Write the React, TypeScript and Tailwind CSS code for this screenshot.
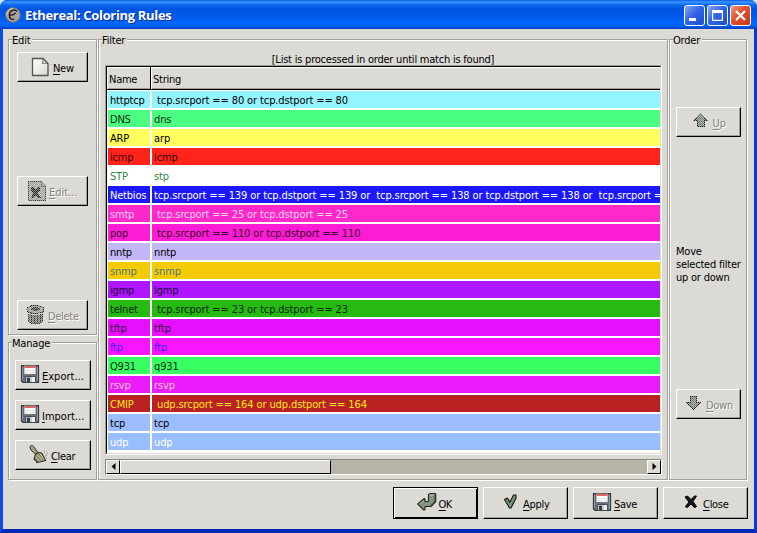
import type { ReactNode } from 'react';

type Rule = { name: string; filter: string; row: string };

const rules: Rule[] = [
  { name: 'httptcp', filter: ' tcp.srcport == 80 or tcp.dstport == 80', row: 'bg-[#94f4ff] text-black' },
  { name: 'DNS', filter: 'dns', row: 'bg-[#4bff81] text-[#102a18]' },
  { name: 'ARP', filter: 'arp', row: 'bg-[#fffe5e] text-black' },
  { name: 'icmp', filter: 'icmp', row: 'bg-[#ff241b] text-[#3a0808]' },
  { name: 'STP', filter: 'stp', row: 'bg-white text-[#2c8a3c]' },
  {
    name: 'Netbios',
    filter:
      'tcp.srcport == 139 or tcp.dstport == 139 or  tcp.srcport == 138 or tcp.dstport == 138 or  tcp.srcport ==',
    row: 'bg-[#1c18fc] text-white',
  },
  { name: 'smtp', filter: ' tcp.srcport == 25 or tcp.dstport == 25', row: 'bg-[#ff28c8] text-[#ffd0f0]' },
  { name: 'pop', filter: ' tcp.srcport == 110 or tcp.dstport == 110', row: 'bg-[#ff1cd4] text-[#350a2c]' },
  { name: 'nntp', filter: 'nntp', row: 'bg-[#c2b6f6] text-black' },
  { name: 'snmp', filter: 'snmp', row: 'bg-[#f5cb08] text-[#4f7a7c]' },
  { name: 'igmp', filter: 'igmp', row: 'bg-[#b016ff] text-[#1c0430]' },
  { name: 'telnet', filter: ' tcp.srcport == 23 or tcp.dstport == 23', row: 'bg-[#27ba12] text-[#062604]' },
  { name: 'tftp', filter: 'tftp', row: 'bg-[#e610ff] text-[#3a0640]' },
  { name: 'ftp', filter: 'ftp', row: 'bg-[#f716ff] text-[#4a20ff]' },
  { name: 'Q931', filter: 'q931', row: 'bg-[#38ff62] text-[#062a10]' },
  { name: 'rsvp', filter: 'rsvp', row: 'bg-[#ea1cff] text-[#ffc8b8]' },
  { name: 'CMIP', filter: ' udp.srcport == 164 or udp.dstport == 164', row: 'bg-[#b82222] text-[#ffe818]' },
  { name: 'tcp', filter: 'tcp', row: 'bg-[#9cbeff] text-black' },
  { name: 'udp', filter: 'udp', row: 'bg-[#98beff] text-white' },
];

function Group({ title, className, children }: { title: string; className: string; children: ReactNode }) {
  return (
    <section
      className={`relative flex flex-col border border-[#a19f97] shadow-[1px_1px_0_#fff,inset_1px_1px_0_#fff] ${className}`}
    >
      <span className="absolute -top-[6px] left-[3px] bg-[#dbdad5] pr-[2px] leading-[14px] tracking-[-0.2px]">{title}</span>
      {children}
    </section>
  );
}

type ButtonProps = {
  icon: ReactNode;
  label: string;
  size: string;
  labelWidth: string;
  disabled?: boolean;
  primary?: boolean;
};

function Button({ icon, label, size, labelWidth, disabled, primary }: ButtonProps) {
  const edge = primary
    ? 'border border-black shadow-[inset_1px_1px_0_#fff,inset_-1px_-1px_0_#000]'
    : 'border border-t-white border-l-white border-r-black border-b-black shadow-[inset_-1px_-1px_0_#a19f97]';
  return (
    <button
      type="button"
      disabled={disabled}
      className={`flex shrink-0 items-center justify-center gap-[2px] ${edge} ${size} ${
        disabled ? 'text-[#85837c] [text-shadow:1px_1px_0_#fff]' : 'text-black'
      }`}
    >
      {icon}
      <span className={`pt-[3px] text-left leading-[14px] whitespace-nowrap ${labelWidth}`}>
        <span className="underline decoration-1 underline-offset-2">{label[0]}</span>
        {label.slice(1)}
      </span>
    </button>
  );
}

function Stipple({ id }: { id: string }) {
  return (
    <pattern id={id} width="2" height="2" patternUnits="userSpaceOnUse">
      <rect width="1" height="1" fill="#dbdad5" fillOpacity=".6" />
      <rect x="1" y="1" width="1" height="1" fill="#dbdad5" fillOpacity=".6" />
    </pattern>
  );
}

const NewIcon = () => (
  <svg width="20" height="20" viewBox="0 0 20 20">
    <defs>
      <linearGradient id="paper" x1="0" y1="0" x2="1" y2="1">
        <stop offset="0" stopColor="#fff" />
        <stop offset="1" stopColor="#d8d8d2" />
      </linearGradient>
    </defs>
    <path d="M1.500 1.500h10.500l5 5v12H1.500z" fill="url(#paper)" stroke="#55554f" strokeWidth="1.300" strokeLinejoin="round" />
    <path d="M11.500 1.500c1 2 .5 3.500-.2 5 2-.6 3.500-.4 5.700.3z" fill="#eeeeea" stroke="#55554f" strokeWidth=".9" />
  </svg>
);

const EditIcon = () => (
  <svg width="20" height="20" viewBox="0 0 20 20" shapeRendering="crispEdges">
    <defs><Stipple id="edit-dots" /></defs>
    <path d="M1.500.5h13l4 4v15h-17z" fill="#a4a4a0" stroke="#444" />
    <path d="M4 6h3l2 3 2-3h2v3l-2 3 3 5h-3l-2-3-2 3H4l2-5-2-3z" fill="#222" />
    <path d="M14 1v4h4" fill="none" stroke="#555" />
    <rect x="1" width="18" height="20" fill="url(#edit-dots)" />
  </svg>
);

const TrashIcon = () => (
  <svg width="20" height="20" viewBox="0 0 20 20" shapeRendering="crispEdges">
    <defs><Stipple id="trash-dots" /></defs>
    <path d="M2 5l1 12q6.500 4 13 0l1-12z" fill="#777772" stroke="#333" />
    <path d="M5 8v9M8 9v9M11 9v9M14 8v9" stroke="#222" />
    <ellipse cx="9.500" cy="4.500" rx="8.500" ry="4" fill="#a0a09a" stroke="#222" />
    <ellipse cx="9.500" cy="4" rx="4.500" ry="1.700" fill="#333" />
    <path d="M2 8q7 3 15 0" fill="none" stroke="#ccc" />
    <rect width="20" height="20" fill="url(#trash-dots)" />
  </svg>
);

const DiskIcon = () => (
  <svg width="20" height="20" viewBox="0 0 20 20" className="-mt-[2px]">
    <path d="M1.500 1.500h17v17H3l-1.500-1.500z" fill="#67727d" stroke="#30373e" strokeWidth="1.200" />
    <path d="M2.500 3v13M17.500 3v14" stroke="#8d9cab" />
    <path d="M4 1.500h12v9H4z" fill="#fbfbfa" stroke="#4a4a4a" strokeWidth=".6" />
    <path d="M4.300 2h11.400v2H4.300z" fill="#dc6a64" />
    <path d="M5 6.500h10M5 8.500h10" stroke="#dcdcdc" strokeWidth=".8" />
    <path d="M5.500 12.500h10v6h-10z" fill="#c6cacd" stroke="#333a40" strokeWidth=".8" />
    <path d="M7 13.700h3v4.300H7z" fill="#343c44" />
    <path d="M12 13h3v5h-3z" fill="#eceeef" />
  </svg>
);

const BroomIcon = () => (
  <svg width="20" height="20" viewBox="0 0 20 20" className="-mt-[2px]">
    <path d="M1 3.500C1 1.500 3 .8 4.500 2.400l5 7-1.800 1.700L2 6z" fill="#a9a58e" stroke="#2f2e25" />
    <path d="M6.500 10.500q3-3.500 6.500-1l3.500 7q-3 1-8.500 2-.5-1.500-3-3.500z" fill="#8c8c6c" stroke="#2f2e25" strokeWidth="1.100" />
    <path d="M8 10.500l5.500 6M11 9.500l4 6M6.500 12.500l4.500 5" stroke="#d1cfaa" />
    <path d="M15 9h1M17 11h1M17 14h1M16 12h1M15 7h1M18 9h1" stroke="#858578" />
  </svg>
);

const UpIcon = () => (
  <svg width="20" height="20" viewBox="0 0 20 20" className="-mt-[5px]" shapeRendering="crispEdges">
    <defs><Stipple id="up-dots" /></defs>
    <path d="M9.500 3.500l6.500 7h-3v6H6v-6H3z" fill="#748274" stroke="#222" />
    <rect width="20" height="20" fill="url(#up-dots)" />
  </svg>
);

const DownIcon = () => (
  <svg width="20" height="20" viewBox="0 0 20 20" className="-mt-[2px]" shapeRendering="crispEdges">
    <defs><Stipple id="down-dots" /></defs>
    <path d="M6.500 3.500h6v6h4l-7 7-7-7h4z" fill="#748274" stroke="#222" />
    <rect width="20" height="20" fill="url(#down-dots)" />
  </svg>
);

const OkIcon = () => (
  <svg width="20" height="20" viewBox="0 0 20 20" className="-mt-[2px]">
    <path
      d="M11.500 2.500l2-1h4.500l.7.700v7.300l-4.700 5H8v3.200l-1.200.3-6-6 6.500-5.500.7.500v2.500h3l.5-1z"
      fill="#82937f" stroke="#20251f" strokeWidth="1.100" strokeLinejoin="round"
    />
    <path d="M12.500 3.200h4.500M7 8.500l-4.500 3.700" fill="none" stroke="#b3c0ae" />
    <path d="M17.500 3v6l-4 4.500" fill="none" stroke="#566552" />
  </svg>
);

const ApplyIcon = () => (
  <svg width="20" height="20" viewBox="0 0 20 20" className="-mt-[2px]">
    <path
      d="M3.500 7.500l3-1.500 2.300 4.300 3.700-7.300h2.500v3.200L10 16H8.500z"
      fill="#6f876b" stroke="#171b16" strokeWidth="1.100" strokeLinejoin="round"
    />
    <path d="M5.500 8.500L9 13.500l4.500-9" fill="none" stroke="#91a58b" strokeWidth=".8" />
  </svg>
);

const CloseIcon = () => (
  <svg width="20" height="20" viewBox="0 0 20 20" className="-mt-[2px]">
    <path
      d="M4 5l2.500-1L10 7.500 13.500 4h2L12 9.500l3.500 5-2 1.200L10 12l-3.500 3.500-2.200-.8L8 10z"
      fill="#171717" stroke="#000" strokeLinejoin="round"
    />
  </svg>
);

const AppIcon = () => (
  <svg width="16" height="16" viewBox="0 0 16 16" className="-mt-[2px]">
    <circle cx="8" cy="8" r="7.300" fill="#a8a49b" stroke="#706e6a" />
    <path d="M1.500 8A6.500 6.500 0 0 1 8 1.500" stroke="#d8d4ca" fill="none" />
    <path d="M12 4.500C9.500 1.500 4.500 3.500 4.300 8c-.1 3.500 2.500 5 5 4M5 8c2 .5 4-.5 5.500-2" fill="none" stroke="#161616" strokeWidth="1.300" />
  </svg>
);

function CaptionButton({ kind }: { kind: 'min' | 'max' | 'close' }) {
  return (
    <span
      className={`flex h-[21px] w-[21px] items-center justify-center rounded-[3px] border border-white ${
        kind === 'close'
          ? 'bg-[linear-gradient(135deg,#ee9a80,#e0502c_45%,#c43a14)]'
          : 'bg-[linear-gradient(135deg,#86a8f4,#3465e6_45%,#1c4cd0)]'
      }`}
    >
      <svg width="19" height="19" viewBox="0 0 19 19">
        {kind === 'min' && <rect x="4" y="12" width="7" height="3" fill="#fff" />}
        {kind === 'max' && <path d="M4 4h11v11H4zM5.200 7v6.800h8.600V7z" fill="#fff" fillRule="evenodd" />}
        {kind === 'close' && <path d="M5 5l9 9M14 5l-9 9" stroke="#fff" strokeWidth="2.200" />}
      </svg>
    </span>
  );
}

function RuleList() {
  const heading = 'border-t border-l border-white pt-[5px] pl-px tracking-[-0.25px] shadow-[inset_0_-1px_0_#a19f97]';
  return (
    <div className="ml-[6px] flex h-[390px] w-[557px] flex-col border border-t-[#a19f97] border-r-white border-b-white border-l-[#a19f97]">
      <div className="flex h-[388px] flex-col overflow-hidden border border-t-black border-r-[#dbdad5] border-b-[#dbdad5] border-l-black bg-white">
        <div className="flex h-[23px] shrink-0 border-b border-black bg-[#dbdad5] leading-[14px]">
          <div className={`w-[43px] ${heading}`}>Name</div>
          <div className="w-px bg-black" />
          <div className={`flex-1 ${heading}`}>String</div>
        </div>
        <div className="flex flex-col gap-[2px] pt-px pl-px">
          {rules.map((r) => (
            <div key={r.name} className="flex h-[17px] gap-[2px] leading-[19px]">
              <div className={`w-[42px] shrink-0 overflow-hidden pl-[2px] tracking-[-0.2px] whitespace-pre ${r.row}`}>{r.name}</div>
              <div className={`flex-1 overflow-hidden pl-[2px] tracking-[-0.11px] whitespace-pre ${r.row}`}>{r.filter}</div>
            </div>
          ))}
        </div>
      </div>
    </div>
  );
}

function ScrollBar() {
  const arrow =
    'flex w-[14px] items-center justify-center border border-t-white border-l-white border-r-black border-b-black bg-[#dbdad5]';
  return (
    <div className="mt-[4px] ml-[6px] flex h-[16px] w-[557px] border border-t-[#85837c] border-r-white border-b-white border-l-[#85837c] bg-[#b8b4aa]">
      <div className={arrow}>
        <svg width="5" height="8" viewBox="0 0 5 8"><path d="M4.500 0v7L.5 3.500z" /></svg>
      </div>
      <div className="w-[211px] border border-t-white border-r-black border-b-black border-l-white bg-[#dbdad5]" />
      <div className="flex-1" />
      <div className={arrow}>
        <svg width="5" height="8" viewBox="0 0 5 8"><path d="M.5 0v7l4-3.500z" /></svg>
      </div>
    </div>
  );
}

export default function App() {
  return (
    <div className="bg-[#d8e4f8]">
      <div className="flex h-[533px] w-[757px] flex-col overflow-hidden rounded-t-[7px] bg-[#0a3fd8] font-['DejaVu_Sans_Condensed','DejaVu_Sans',sans-serif] text-[11px] text-black">
        <header className="flex h-[29px] shrink-0 items-center bg-[linear-gradient(180deg,#0a5ae0_0,#3a96ff_2px,#0a66ee_5px,#0054e0_9px,#0058ea_16px,#0268ff_24px,#0060f4_26px,#003cc0_29px)] pt-[2px] pr-[6px] pl-[5px]">
          <AppIcon />
          <h1 className="ml-[4px] flex-1 pt-px font-['Open_Sans','Noto_Sans',sans-serif] text-[13px] font-bold tracking-[-0.33px] whitespace-nowrap text-white [text-shadow:1px_1px_0_#0a2a90]">
            Ethereal: Coloring Rules
          </h1>
          <div className="flex gap-[2px]">
            <CaptionButton kind="min" />
            <CaptionButton kind="max" />
            <CaptionButton kind="close" />
          </div>
        </header>
        <div className="flex h-[504px] flex-col border-t-0 border-r-[3px] border-b-[4px] border-l-[3px] border-r-[#0a38d0] border-b-[#0428b8] border-l-[#0c4ce4] bg-[#dbdad5] pt-[10px] pl-[5px]">
          <main className="flex h-[441px] gap-px">
            <div className="flex w-[89px] flex-col">
              <Group title="Edit" className="h-[296px] items-start gap-[94px] pt-[12px] pl-[8px]">
                <Button icon={<NewIcon />} label="New" size="h-[30px] w-[71px]" labelWidth="w-[21px] tracking-[-0.3px]" />
                <Button icon={<EditIcon />} label="Edit..." size="h-[30px] w-[71px]" labelWidth="w-[29px]" disabled />
                <Button icon={<TrashIcon />} label="Delete" size="h-[30px] w-[71px]" labelWidth="w-[31px] tracking-[-0.3px]" disabled />
              </Group>
              <Group title="Manage" className="mt-[7px] h-[138px] items-start gap-[10px] pt-[17px] pl-[6px]">
                <Button icon={<DiskIcon />} label="Export..." size="h-[30px] w-[76px]" labelWidth="w-[44px]" />
                <Button icon={<DiskIcon />} label="Import..." size="h-[30px] w-[76px]" labelWidth="w-[44px]" />
                <Button icon={<BroomIcon />} label="Clear" size="h-[30px] w-[76px]" labelWidth="w-[26px] tracking-[-0.35px]" />
              </Group>
            </div>
            <Group title="Filter" className="w-[570px]">
              <p className="mt-[13px] mb-[-1px] h-[13px] text-center leading-[13px] tracking-[-0.22px]">
                [List is processed in order until match is found]
              </p>
              <RuleList />
              <ScrollBar />
            </Group>
            <Group title="Order" className="w-[78px] items-start justify-between pt-[67px] pb-[60px] pl-[6px]">
              <Button icon={<UpIcon />} label="Up" size="h-[30px] w-[65px]" labelWidth="w-[14px]" disabled />
              <p className="pt-[2px] leading-[13px] tracking-[-0.22px] whitespace-nowrap">
                Move
                <br />
                selected filter
                <br />
                up or down
              </p>
              <Button icon={<DownIcon />} label="Down" size="h-[30px] w-[65px]" labelWidth="w-[27px] tracking-[-0.3px]" disabled />
            </Group>
          </main>
          <footer className="mt-[7px] flex justify-end gap-[5px] pr-[6px]">
            <Button icon={<OkIcon />} label="OK" size="h-[32px] w-[85px]" labelWidth="w-[16px] tracking-[-0.5px]" primary />
            <Button icon={<ApplyIcon />} label="Apply" size="h-[32px] w-[85px]" labelWidth="w-[27px] tracking-[-0.3px]" />
            <Button icon={<DiskIcon />} label="Save" size="h-[32px] w-[85px]" labelWidth="w-[25px] tracking-[-0.3px]" />
            <Button icon={<CloseIcon />} label="Close" size="h-[32px] w-[85px]" labelWidth="w-[27px] tracking-[-0.3px]" />
          </footer>
        </div>
      </div>
    </div>
  );
}
